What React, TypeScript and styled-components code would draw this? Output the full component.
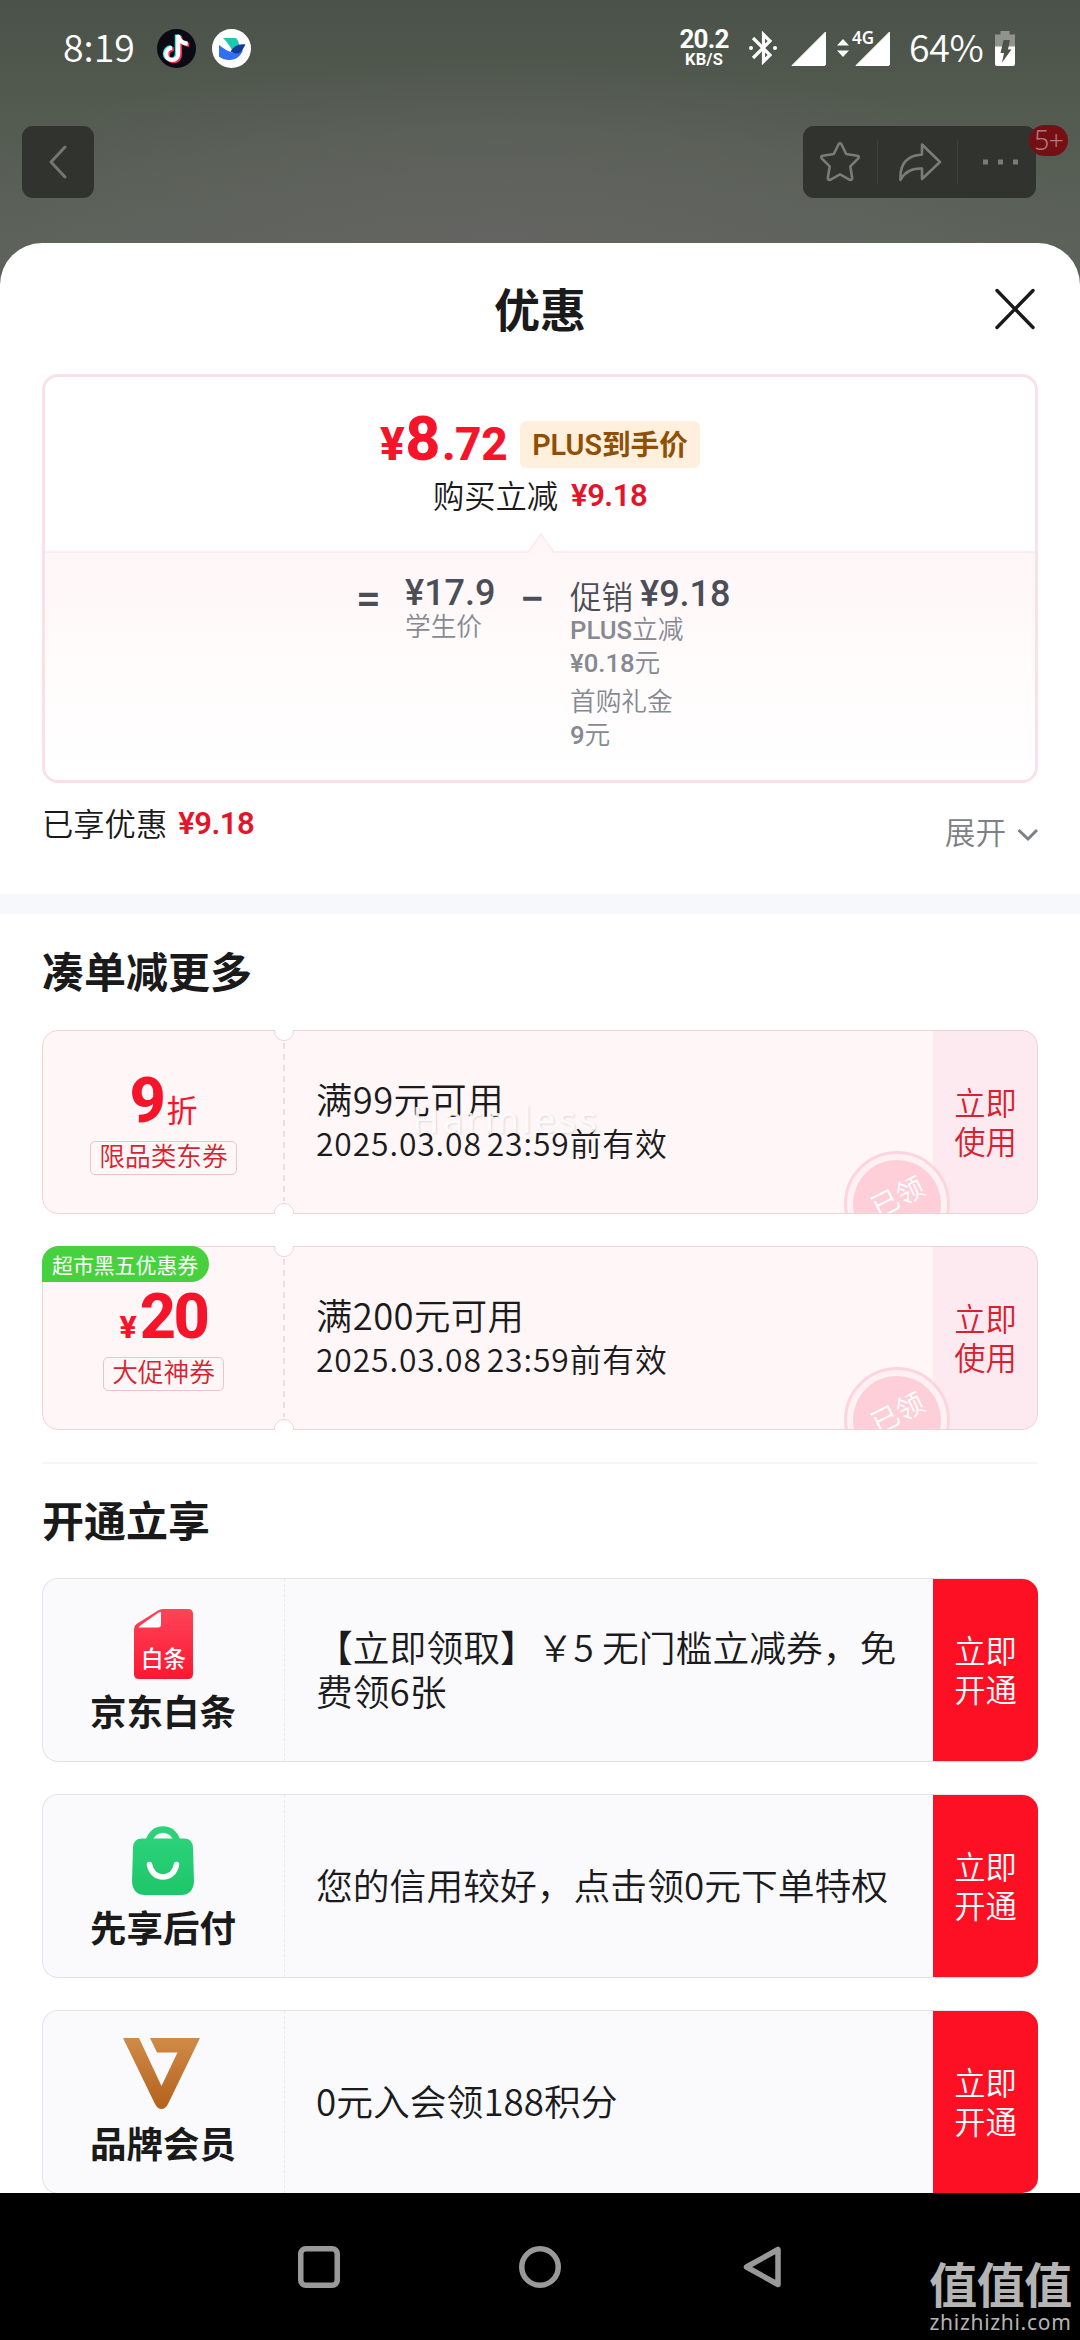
import React from "react";
import styled, { createGlobalStyle } from "styled-components";

const GlobalStyle = createGlobalStyle`
  * { box-sizing: border-box; }
  html, body { margin: 0; padding: 0; background: #000; }
  body { font-family: "Noto Sans", "Noto Sans CJK SC", sans-serif; font-weight: 350; color: #1a1a1a; }
  svg { display: block; flex: none; }
`;

const numberFont = `Roboto, "Noto Sans CJK SC", sans-serif`;
const textFont = `"Noto Sans CJK SC", "Noto Sans", sans-serif`;

const Screen = styled.div`
  position: relative;
  width: 1080px;
  height: 2340px;
  overflow: hidden;
  display: flex;
  flex-direction: column;
  background: radial-gradient(ellipse 620px 190px at 500px 250px, #646461 0%, rgba(98, 100, 96, 0.6) 50%, rgba(90, 97, 88, 0) 100%),
    linear-gradient(180deg, #4a5249 0px, #535a50 110px, #5b6259 240px, #5b6259 300px);
`;

const StatusBar = styled.header`
  height: 98px;
  flex: none;
  display: flex;
  align-items: center;
  padding: 0 65px 2px 63px;
  color: #fff;
`;

const Clock = styled.span`
  width: 94px;
  padding-bottom: 5px;
  font-family: ${textFont};
  font-size: 37.5px;
  line-height: 40px;
`;

const AppIcons = styled.div`
  display: flex;
  gap: 16px;
  margin-right: auto;
`;

const NetSpeed = styled.div`
  width: 50px;
  margin-right: 20px;
  display: flex;
  flex-direction: column;
  align-items: center;
  padding-top: 1px;
  font-family: ${numberFont};
  font-weight: 700;
`;

const SpeedValue = styled.span`
  font-size: 26px;
  line-height: 23px;
  letter-spacing: -0.8px;
`;

const SpeedUnit = styled.span`
  font-size: 16.5px;
  line-height: 18px;
  letter-spacing: 0.2px;
`;

const Signals = styled.div`
  position: relative;
  display: flex;
  align-items: center;
  margin: 0 19px 0 14px;
`;

const ArrowSlot = styled.span`
  margin: 0 6px 0 11px;
`;

const NetworkType = styled.span`
  position: absolute;
  left: 61px;
  top: -3px;
  font-size: 17px;
  line-height: 20px;
  font-weight: 600;
`;

const BatteryText = styled.span`
  width: 86px;
  padding-bottom: 5px;
  font-family: ${textFont};
  font-size: 37.5px;
  line-height: 40px;
  letter-spacing: -0.3px;
`;

const TopBar = styled.nav`
  height: 145px;
  flex: none;
  display: flex;
  justify-content: space-between;
  align-items: flex-start;
  padding: 28px 44px 0 22px;
`;

const DarkButton = styled.div`
  width: 72px;
  height: 72px;
  border-radius: 11px;
  background: #30332e;
  display: flex;
  align-items: center;
  justify-content: center;
`;

const ToolGroup = styled.div`
  position: relative;
  width: 233px;
  height: 72px;
  border-radius: 11px;
  background: #30332e;
  display: grid;
  grid-template-columns: 75px 80px 78px;
  align-items: center;
`;

const Tool = styled.div<{ $divided?: boolean; $shift?: number }>`
  height: 44px;
  display: flex;
  align-items: center;
  justify-content: center;
  padding-left: ${(p) => p.$shift ?? 0}px;
  border-right: ${(p) => (p.$divided ? "1px solid #3d403b" : "none")};
`;

const CountBadge = styled.span`
  position: absolute;
  left: 226px;
  top: -1px;
  width: 39px;
  height: 31px;
  border-radius: 16px;
  background: #760f13;
  color: #a67c7c;
  font-size: 27px;
  line-height: 30px;
  text-align: center;
  letter-spacing: -1px;
`;

const Sheet = styled.main`
  flex: none;
  height: 1950px;
  background: #fff;
  border-radius: 42px 42px 0 0;
  display: flex;
  flex-direction: column;
`;

const SheetHeader = styled.div`
  height: 131px;
  flex: none;
  display: grid;
  grid-template-columns: 1fr auto 1fr;
  align-items: center;
  padding: 0 45px;
`;

const SheetTitle = styled.h1`
  grid-column: 2;
  margin: 0;
  font-size: 46px;
  line-height: 60px;
  font-weight: 700;
`;

const CloseButton = styled.div`
  justify-self: end;
`;

const PriceCard = styled.section`
  height: 409px;
  flex: none;
  margin: 0 42px;
  border: 3px solid #fae0e7;
  border-radius: 16px;
  overflow: hidden;
  display: flex;
  flex-direction: column;
`;

const PriceTop = styled.div`
  height: 174px;
  padding-top: 37px;
  display: flex;
  flex-direction: column;
  align-items: center;
`;

const PriceRow = styled.div`
  height: 60px;
  display: flex;
  align-items: center;
  gap: 13px;
`;

const FinalPrice = styled.div`
  font-family: ${numberFont};
  font-weight: 800;
  color: #f5142a;
  font-size: 46px;
  line-height: 60px;
  padding-bottom: 1px;
  letter-spacing: -0.5px;
`;

const PriceInteger = styled.span`
  font-size: 61px;
  line-height: 1px;
  margin: 0 2px 0 1px;
`;

const PlusBadge = styled.span`
  height: 47px;
  padding: 0 12px;
  border-radius: 6px;
  background: #fef0dc;
  color: #8f4f05;
  font-family: ${numberFont};
  font-weight: 600;
  font-size: 28.7px;
  line-height: 48px;
`;

const SavingLine = styled.div<{ $gap: number }>`
  display: flex;
  gap: ${(p) => p.$gap}px;
  font-size: 31.3px;
  line-height: 44px;
`;

const RedAmount = styled.span`
  font-family: ${numberFont};
  font-weight: 600;
  color: #e3152b;
  font-size: 31px;
  letter-spacing: -0.5px;
`;

const Breakdown = styled.div`
  position: relative;
  flex: 1;
  border-top: 2px solid #fdecf1;
  background: linear-gradient(180deg, #fff6f8 0%, #fffbfb 45%, #ffffff 100%);
  display: grid;
  grid-template-columns: 49px 115px 50px auto;
  justify-content: start;
  padding: 18px 0 0 311px;
  color: #4b4e57;
`;

const Pointer = styled.svg`
  position: absolute;
  left: 482px;
  top: -21px;
`;

const Operator = styled.span`
  font-family: ${numberFont};
  font-size: 44px;
  line-height: 56px;
  font-weight: 500;
`;

const Term = styled.div`
  display: flex;
  flex-direction: column;
`;

const TermAmount = styled.div<{ $height: number }>`
  height: ${(p) => p.$height - 5}px;
  display: flex;
  gap: 7px;
  font-size: 31.5px;
  line-height: ${(p) => p.$height}px;
`;

const AmountNumber = styled.span`
  font-family: ${numberFont};
  font-size: 36px;
  font-weight: 500;
`;

const PromoLabel = styled.span`
  padding-top: 2px;
`;

const TermNote = styled.span<{ $spaced?: boolean }>`
  height: 33px;
  margin-top: ${(p) => (p.$spaced ? 6 : 0)}px;
  font-size: 25.7px;
  line-height: 33px;
  color: #868991;
`;

const NoteLatin = styled.span`
  font-family: ${numberFont};
  font-weight: 500;
  line-height: 1;
`;

const Summary = styled.div`
  height: 111px;
  flex: none;
  padding: 19px 42px 0;
  display: flex;
  justify-content: space-between;
`;

const Expand = styled.div`
  height: 44px;
  margin-top: 8px;
  display: flex;
  align-items: center;
  gap: 10px;
  font-size: 30.6px;
  line-height: 44px;
  color: #7d7f86;
`;

const ExpandArrow = styled.span`
  padding-top: 5px;
`;

const Band = styled.div`
  height: 20px;
  flex: none;
  background: #f7f8fc;
`;

const Section = styled.section<{ $ruled?: boolean }>`
  margin: 0 42px;
  flex: none;
  display: flex;
  flex-direction: column;
  gap: 32px;
  border-top: ${(p) => (p.$ruled ? "2px solid #f6f6f8" : "none")};
`;

const SectionTitle = styled.h2<{ $height: number }>`
  margin: 0;
  height: ${(p) => p.$height}px;
  font-size: 42px;
  line-height: ${(p) => p.$height + 31}px;
  font-weight: 700;
`;

const Coupon = styled.article`
  position: relative;
  height: 184px;
  border-radius: 16px;
  overflow: hidden;
  background: #fef6f7;
  display: grid;
  grid-template-columns: 243px 1fr 105px;

  &::after {
    content: "";
    position: absolute;
    inset: 0;
    border: 1.5px solid #efd3db;
    border-radius: 16px;
  }
`;

const Notch = styled.span<{ $end: "top" | "bottom" }>`
  position: absolute;
  z-index: 1;
  left: 232px;
  ${(p) => p.$end}: -9px;
  width: 20px;
  height: 20px;
  border-radius: 50%;
  border: 1.5px solid #efd3db;
  background: #fff;
`;

const CouponValue = styled.div`
  position: relative;
  display: flex;
  flex-direction: column;
  align-items: center;
  padding: 33px 0 0;

  &::after {
    content: "";
    position: absolute;
    right: 0;
    top: 13px;
    bottom: 13px;
    width: 2px;
    background: repeating-linear-gradient(180deg, #f5dbe1 0 6px, transparent 6px 11px);
  }
`;

const Amount = styled.div`
  height: 78px;
  display: flex;
  align-items: baseline;
  gap: 3px;
  color: #f5142a;
  font-family: ${numberFont};
  font-weight: 800;
  font-size: 63px;
  line-height: 75px;
`;

const AmountValue = styled.span`
  letter-spacing: -2.5px;
`;

const AmountUnit = styled.span<{ $size: number; $weight: number }>`
  font-size: ${(p) => p.$size}px;
  font-weight: ${(p) => p.$weight};
  line-height: 30px;
`;

const CouponKind = styled.span`
  height: 34px;
  padding: 0 8px;
  border: 1.5px solid #efc2cb;
  border-radius: 5px;
  color: #d8222f;
  font-size: 25.7px;
  line-height: 29px;
`;

const GreenTag = styled.span`
  position: absolute;
  z-index: 1;
  left: 0;
  top: 0;
  height: 36px;
  padding: 0 11px 0 10px;
  border-radius: 16px 18px 18px 0;
  background: #48d13e;
  color: #fff;
  font-size: 20.9px;
  line-height: 38px;
  font-weight: 400;
`;

const Info = styled.div<{ $size: number; $line: number }>`
  display: flex;
  flex-direction: column;
  justify-content: center;
  padding: 0 0 4px 31px;
  font-family: ${textFont};
  font-size: ${(p) => p.$size}px;
  line-height: ${(p) => p.$line}px;
  color: #1b1b1d;
  white-space: pre;
`;

const Condition = styled.span`
  letter-spacing: 0.4px;
`;

const Expiry = styled.span`
  font-size: 31.8px;
  letter-spacing: 0.9px;
  word-spacing: -3px;
`;

const Action = styled.div<{ $solid?: boolean }>`
  display: flex;
  flex-direction: column;
  align-items: center;
  justify-content: center;
  padding-top: 2px;
  font-size: 31.3px;
  line-height: 39px;
  background: ${(p) => (p.$solid ? "#fe1024" : "#fde9f0")};
  color: ${(p) => (p.$solid ? "#fff" : "#d8222f")};
`;

const Stamp = styled.div`
  position: absolute;
  left: 802px;
  top: 121px;
  width: 106px;
  height: 106px;
  border-radius: 50%;
  border: 3px solid #fcd5de;
  background: #fff0f3;
  padding: 6px;
`;

const StampFace = styled.div`
  width: 88px;
  height: 88px;
  border-radius: 50%;
  background: #fecfd9;
  color: #fff;
  font-size: 27.5px;
  line-height: 73px;
  text-align: center;
`;

const StampText = styled.span`
  display: inline-block;
  transform: rotate(-27deg);
`;

const Offer = styled.article`
  height: 184px;
  border-radius: 16px;
  overflow: hidden;
  border: 1px solid #e3e4e8;
  border-right: none;
  background: #fafafd;
  display: grid;
  grid-template-columns: 242px 1fr 105px;
`;

const OfferBrand = styled.div`
  display: flex;
  flex-direction: column;
  align-items: center;
  padding-right: 1px;
  border-right: 1px dashed #e9eaee;
`;

const IconSlot = styled.div`
  height: 108px;
  display: flex;
  align-items: flex-end;
  justify-content: center;
  padding-bottom: 8px;
`;

const OfferName = styled.span`
  font-size: 36.5px;
  line-height: 51px;
  font-weight: 700;
`;

const NavBar = styled.footer`
  flex: 1;
  background: #000;
  display: flex;
  align-items: center;
  justify-content: center;
  gap: 179px;
`;

const CenterMark = styled.span`
  position: absolute;
  left: 412px;
  top: 1091px;
  font-size: 37px;
  line-height: 56px;
  letter-spacing: 3px;
  font-weight: 400;
  color: rgba(255, 255, 255, 0.9);
  text-shadow: 1px 1px 2px rgba(120, 90, 100, 0.2);
`;

const CornerMark = styled.div`
  position: absolute;
  right: 8px;
  bottom: 7px;
  width: 143px;
  display: flex;
  flex-direction: column;
  align-items: center;
  color: #b4b4b4;
`;

const CornerLogo = styled.span`
  font-size: 48px;
  line-height: 53px;
  font-weight: 700;
  letter-spacing: -0.5px;
`;

const CornerSite = styled.span`
  font-size: 21px;
  line-height: 22px;
  font-weight: 400;
  letter-spacing: 0.7px;
`;

const TikTokIcon = () => (
  <svg width="39" height="39" viewBox="0 0 39 39">
    <circle cx="19.5" cy="19.5" r="19.5" fill="#0b0a14" />
    <g fill="none" strokeWidth="4.2">
      <path d="M20.6 6v19a6 6 0 1 1-6-6M20.6 6c.6 5 4 8.4 9.5 8.6" stroke="#2af0ea" transform="translate(-0.7 -0.6)" />
      <path d="M21.8 6v19a6 6 0 1 1-6-6M21.8 6c.6 5 4 8.4 9.5 8.6" stroke="#fe2c55" transform="translate(1 1.2)" />
      <path d="M21.2 6v19a6 6 0 1 1-6-6M21.2 6c.6 5 4 8.4 9.5 8.6" stroke="#fff" />
    </g>
  </svg>
);

const LarkIcon = () => (
  <svg width="39" height="39" viewBox="0 0 39 39">
    <circle cx="19.5" cy="19.5" r="19.5" fill="#fff" />
    <path d="M11 9h13c2 2 3 5 3.200 7.500-3 .5-5 2-7 4.500C17 16 14.500 12 11 9z" fill="#1fc7b0" />
    <path d="M7 16c5 4 10 7 16 8 3 .4 6-1 8-3-2 6-7 10-13.500 10C13.500 31 10 30 7 27.500z" fill="#3370f0" />
    <path d="M18.500 22.500c3-4.500 7-8 15-7-2 3-3 7-6 8.500-3 1.200-6 .2-9-1.500z" fill="#133c9a" />
  </svg>
);

const BluetoothIcon = () => (
  <svg width="28" height="34" viewBox="0 0 28 34" fill="none" stroke="#fff" strokeWidth="3.2">
    <path d="M4 7l17 17-6.500 6.500V3.500L21 10 4 27" />
    <circle cx="2" cy="17" r="2" fill="#fff" stroke="none" />
    <circle cx="26" cy="17" r="2" fill="#fff" stroke="none" />
  </svg>
);

const SignalIcon = () => (
  <svg width="35" height="35" viewBox="0 0 35 35">
    <path d="M34.500 1v32q0 1.500-1.500 1.500H1z" fill="#fff" stroke="#fff" strokeLinejoin="round" />
  </svg>
);

const DataArrows = () => (
  <svg width="12" height="18" viewBox="0 0 12 18" fill="#fff">
    <path d="M6 0l6 6.500H0zM6 18l6-6.500H0z" />
  </svg>
);

const BatteryIcon = () => (
  <svg width="20" height="35" viewBox="0 0 20 35">
    <path d="M5.500 0h9v3.500H20V16H0V3.500h5.500z" fill="#8f948d" />
    <path d="M0 15.500h20V33q0 2-2 2H2q-2 0-2-2z" fill="#fff" />
    <path d="M8.500 9H15L13 18.500H16.500L7 31.500 9 22H5.500z" fill="#4d554b" />
  </svg>
);

const BackIcon = () => (
  <svg width="18" height="34" viewBox="0 0 18 34" fill="none" stroke="#74766f" strokeWidth="3" strokeLinecap="round" strokeLinejoin="round">
    <path d="M16 2L2 17l14 15" />
  </svg>
);

const StarIcon = () => (
  <svg width="42" height="42" viewBox="0 0 42 42" fill="none" stroke="#7a7c77" strokeWidth="2.6" strokeLinejoin="round">
    <path d="M19.600 3.200q1.400-1.800 2.800 0l4.800 9.800 11.200 1.700q2.200.8.900 2.600l-8 8 1.900 11.900q-.2 2.300-2.400 1.600L21 33.400 11.200 38.800q-2.200.7-2.400-1.600l1.900-11.900-8-8q-1.300-1.800.9-2.600L14.800 13z" />
  </svg>
);

const ShareIcon = () => (
  <svg width="44" height="40" viewBox="0 0 44 40" fill="none" stroke="#7a7c77" strokeWidth="2.6" strokeLinejoin="round">
    <path d="M24 2.500L42 20 24 37V26.500C14 26 7 29 2.500 38 1.500 22 9 13.500 24 12.500z" />
  </svg>
);

const DotsIcon = () => (
  <svg width="36" height="6" viewBox="0 0 36 6" fill="#7a7c77">
    <path d="M0 .5h5v5H0zM15 .5h5v5h-5zM30 .5h5v5h-5z" />
  </svg>
);

const CloseIcon = () => (
  <svg width="40" height="42" viewBox="0 0 40 42" stroke="#1a1a1a" strokeWidth="3.4" strokeLinecap="round">
    <path d="M2 2.500l36 37M38 2.500L2 39.500" />
  </svg>
);

const ChevronDown = () => (
  <svg width="22" height="14" viewBox="0 0 22 14" fill="none" stroke="#7d7f86" strokeWidth="3">
    <path d="M2.500 2L12 11l9-9" />
  </svg>
);

const IconLabel = styled.text`
  font-family: "Noto Sans CJK SC", sans-serif;
  font-size: 22.5px;
  font-weight: 500;
  fill: #fff;
`;

const BaitiaoIcon = () => (
  <svg width="59" height="70" viewBox="0 0 59 70">
    <defs>
      <linearGradient id="baitiao" x1="0" y1="0" x2="0" y2="1">
        <stop offset="0" stopColor="#fd4459" />
        <stop offset="1" stopColor="#fd1730" />
      </linearGradient>
    </defs>
    <path d="M29 0h25q5 0 5 5v60q0 5-5 5H5q-5 0-5-5V20q0-3 2.500-5L24 1.500Q26 0 29 0z" fill="url(#baitiao)" />
    <path d="M27 3v12.500q0 3-3 3H4.500q1-1.500 2.500-2.500L22.500 5Q25 3.200 27 3z" fill="#fff" />
    <IconLabel x="29.500" y="58" textAnchor="middle">白条</IconLabel>
  </svg>
);

const BagIcon = () => (
  <svg width="62" height="69" viewBox="0 0 62 69">
    <defs>
      <linearGradient id="bag" x1="0" y1="0" x2="0" y2="1">
        <stop offset="0" stopColor="#2bd27a" />
        <stop offset="1" stopColor="#1fc568" />
      </linearGradient>
    </defs>
    <path d="M16.500 16C19 8 24 3.500 31 3.500S43 8 45.500 16" fill="none" stroke="#2bd27a" strokeWidth="6.5" />
    <path d="M10 12.500h42q8.500 0 9 9l1 34Q61 69 49 69H13Q1 69 0 55.500l1-34q.5-9 9-9z" fill="url(#bag)" />
    <path d="M17.500 38.500C20 55 42 55 44.500 38.500" fill="none" stroke="#fff" strokeWidth="5.5" strokeLinecap="round" />
  </svg>
);

const MemberIcon = () => (
  <svg width="80" height="73" viewBox="0 0 80 73">
    <defs>
      <linearGradient id="member" x1="0" y1="0" x2="0" y2="1">
        <stop offset="0" stopColor="#d08b48" />
        <stop offset="1" stopColor="#b3611c" />
      </linearGradient>
    </defs>
    <path d="M0 0h16L38.500 48 54.500 14.500H34L27 0h50L45 66q-2.500 5-6.500 5T32 66z" fill="url(#member)" />
  </svg>
);

const RecentsIcon = () => (
  <svg width="42" height="42" viewBox="0 0 42 42" fill="none" stroke="#999" strokeWidth="5.5">
    <rect x="2.750" y="2.750" width="36.500" height="36.500" rx="5" />
  </svg>
);

const HomeIcon = () => (
  <svg width="42" height="42" viewBox="0 0 42 42" fill="none" stroke="#999" strokeWidth="5.5">
    <circle cx="21" cy="21" r="18.250" />
  </svg>
);

const NavBackIcon = () => (
  <svg width="42" height="42" viewBox="0 0 42 42" fill="none" stroke="#999" strokeWidth="5.5" strokeLinejoin="round">
    <path d="M38 3.500v35L6.500 21z" />
  </svg>
);

interface CouponData {
  prefix?: string;
  value: string;
  suffix?: string;
  kind: string;
  condition: string;
  tag?: string;
}

const coupons: CouponData[] = [
  { value: "9", suffix: "折", kind: "限品类东券", condition: "满99元可用" },
  { prefix: "¥", value: "20", kind: "大促神券", condition: "满200元可用", tag: "超市黑五优惠券" },
];

const offers = [
  { icon: <BaitiaoIcon />, name: "京东白条", lines: ["【立即领取】￥5 无门槛立减券，免", "费领6张"] },
  { icon: <BagIcon />, name: "先享后付", lines: ["您的信用较好，点击领0元下单特权"] },
  { icon: <MemberIcon />, name: "品牌会员", lines: ["0元入会领188积分"] },
];

const CouponCard = ({ prefix, value, suffix, kind, condition, tag }: CouponData) => (
  <Coupon>
    <CouponValue>
      <Amount>
        {prefix && <AmountUnit $size={32} $weight={800}>{prefix}</AmountUnit>}
        <AmountValue>{value}</AmountValue>
        {suffix && <AmountUnit $size={31} $weight={400}>{suffix}</AmountUnit>}
      </Amount>
      <CouponKind>{kind}</CouponKind>
    </CouponValue>
    <Info $size={36.4} $line={44}>
      <Condition>{condition}</Condition>
      <Expiry>2025.03.08 23:59前有效</Expiry>
    </Info>
    <Action>
      <span>立即</span>
      <span>使用</span>
    </Action>
    <Notch $end="top" />
    <Notch $end="bottom" />
    {tag && <GreenTag>{tag}</GreenTag>}
    <Stamp>
      <StampFace>
        <StampText>已领</StampText>
      </StampFace>
    </Stamp>
  </Coupon>
);

export default function App() {
  return (
    <>
      <GlobalStyle />
      <Screen>
        <StatusBar>
          <Clock>8:19</Clock>
          <AppIcons>
            <TikTokIcon />
            <LarkIcon />
          </AppIcons>
          <NetSpeed>
            <SpeedValue>20.2</SpeedValue>
            <SpeedUnit>KB/S</SpeedUnit>
          </NetSpeed>
          <BluetoothIcon />
          <Signals>
            <SignalIcon />
            <ArrowSlot>
              <DataArrows />
            </ArrowSlot>
            <NetworkType>4G</NetworkType>
            <SignalIcon />
          </Signals>
          <BatteryText>64%</BatteryText>
          <BatteryIcon />
        </StatusBar>

        <TopBar>
          <DarkButton>
            <BackIcon />
          </DarkButton>
          <ToolGroup>
            <Tool $divided>
              <StarIcon />
            </Tool>
            <Tool $divided $shift={4}>
              <ShareIcon />
            </Tool>
            <Tool $shift={8}>
              <DotsIcon />
            </Tool>
            <CountBadge>5+</CountBadge>
          </ToolGroup>
        </TopBar>

        <Sheet>
          <SheetHeader>
            <SheetTitle>优惠</SheetTitle>
            <CloseButton>
              <CloseIcon />
            </CloseButton>
          </SheetHeader>

          <PriceCard>
            <PriceTop>
              <PriceRow>
                <FinalPrice>
                  ¥<PriceInteger>8</PriceInteger>.72
                </FinalPrice>
                <PlusBadge>PLUS到手价</PlusBadge>
              </PriceRow>
              <SavingLine $gap={13}>
                <span>购买立减</span>
                <RedAmount>¥9.18</RedAmount>
              </SavingLine>
            </PriceTop>
            <Breakdown>
              <Pointer width="28" height="22" viewBox="0 0 28 22">
                <path d="M1 22L14 3l13 19z" fill="#fff6f8" />
                <path d="M1 20.500L14 2l13 18.500" fill="none" stroke="#fdecf1" strokeWidth="2" />
              </Pointer>
              <Operator>=</Operator>
              <Term>
                <TermAmount $height={44}>
                  <AmountNumber>¥17.9</AmountNumber>
                </TermAmount>
                <TermNote>学生价</TermNote>
              </Term>
              <Operator>−</Operator>
              <Term>
                <TermAmount $height={47}>
                  <PromoLabel>促销</PromoLabel>
                  <AmountNumber>¥9.18</AmountNumber>
                </TermAmount>
                <TermNote><NoteLatin>PLUS</NoteLatin>立减</TermNote>
                <TermNote><NoteLatin>¥0.18</NoteLatin>元</TermNote>
                <TermNote $spaced>首购礼金</TermNote>
                <TermNote><NoteLatin>9</NoteLatin>元</TermNote>
              </Term>
            </Breakdown>
          </PriceCard>

          <Summary>
            <SavingLine $gap={11}>
              <span>已享优惠</span>
              <RedAmount>¥9.18</RedAmount>
            </SavingLine>
            <Expand>
              <span>展开</span>
              <ExpandArrow>
                <ChevronDown />
              </ExpandArrow>
            </Expand>
          </Summary>

          <Band />

          <Section>
            <SectionTitle $height={84}>凑单减更多</SectionTitle>
            {coupons.map((coupon) => (
              <CouponCard key={coupon.kind} {...coupon} />
            ))}
            <span />
          </Section>

          <Section $ruled>
            <SectionTitle $height={82}>开通立享</SectionTitle>
            {offers.map((offer) => (
              <Offer key={offer.name}>
                <OfferBrand>
                  <IconSlot>{offer.icon}</IconSlot>
                  <OfferName>{offer.name}</OfferName>
                </OfferBrand>
                <Info $size={36.8} $line={44.5}>
                  {offer.lines.map((line) => (
                    <span key={line}>{line}</span>
                  ))}
                </Info>
                <Action $solid>
                  <span>立即</span>
                  <span>开通</span>
                </Action>
              </Offer>
            ))}
          </Section>
        </Sheet>

        <NavBar>
          <RecentsIcon />
          <HomeIcon />
          <NavBackIcon />
        </NavBar>

        <CenterMark>Harmless</CenterMark>
        <CornerMark>
          <CornerLogo>值值值</CornerLogo>
          <CornerSite>zhizhizhi.com</CornerSite>
        </CornerMark>
      </Screen>
    </>
  );
}
